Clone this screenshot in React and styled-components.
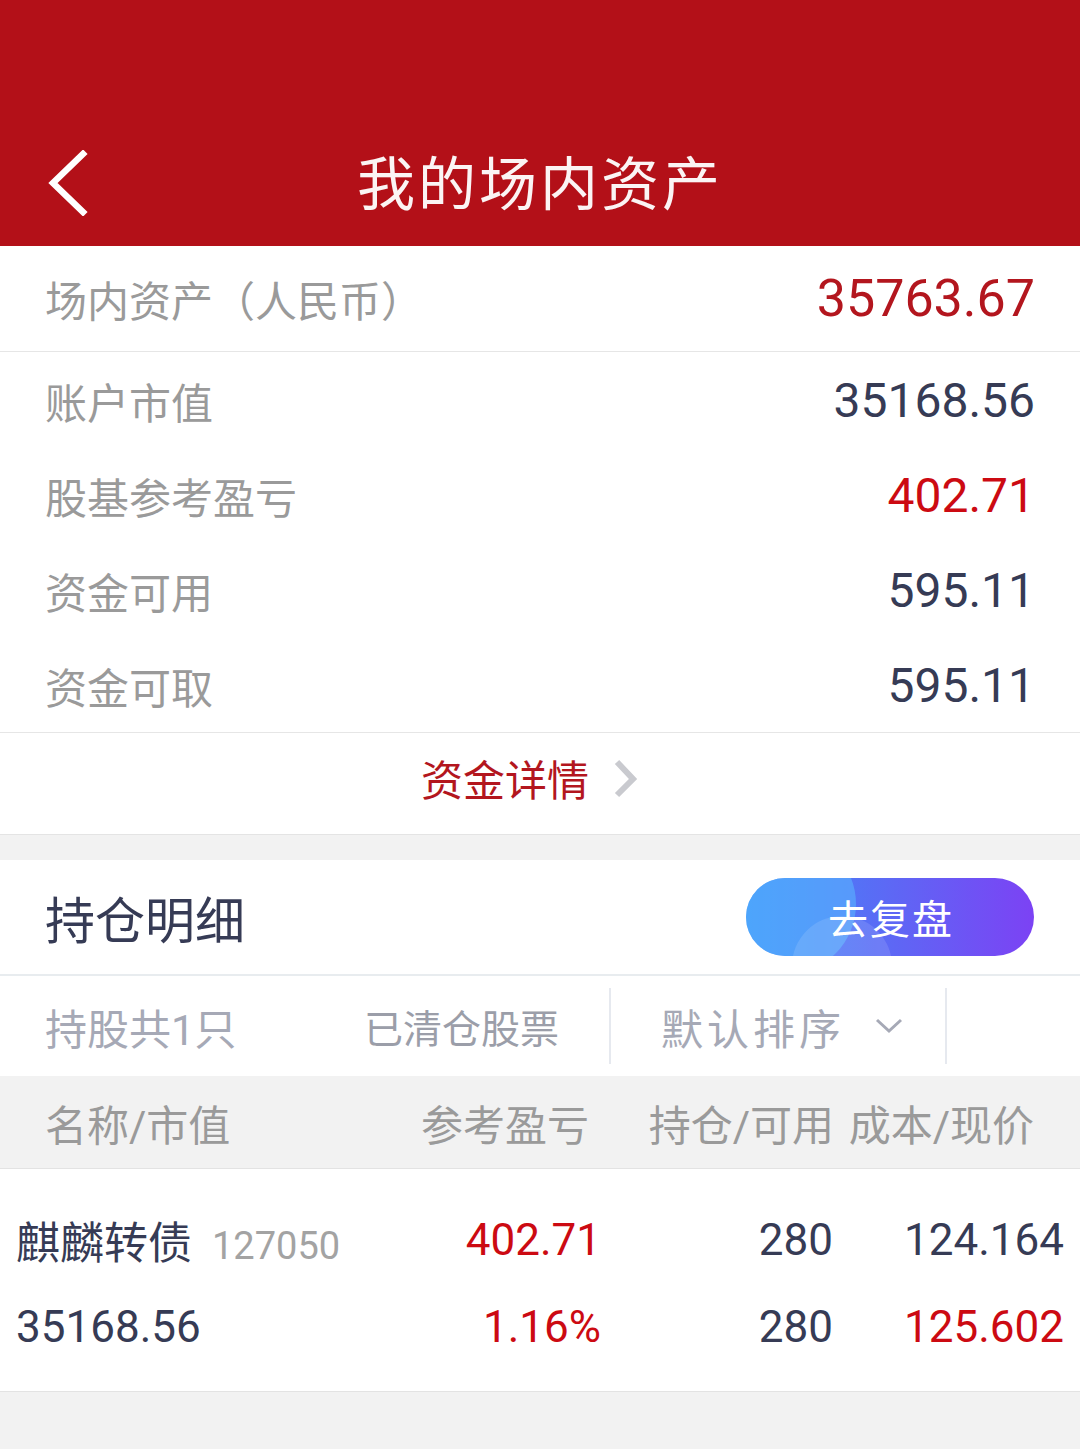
import React from "react";
import styled, { createGlobalStyle } from "styled-components";

const Global = createGlobalStyle`
  html, body { margin: 0; padding: 0; background: #f2f2f2; }
  body { font-family: Roboto, "Noto Sans CJK SC", "Noto Sans", sans-serif; }
  * { box-sizing: border-box; }
`;

const Page = styled.div`
  width: 1080px;
  min-height: 1449px;
  background: #f2f2f2;
  display: flex;
  flex-direction: column;
`;

const Header = styled.header`
  height: 246px;
  background: #b31018;
  display: flex;
  flex-direction: column;
  justify-content: flex-end;
`;

const HeaderBar = styled.div`
  height: 122px;
  position: relative;
  display: flex;
  align-items: center;
  justify-content: center;
`;

const BackBtn = styled.div`
  position: absolute;
  left: 44px;
  top: 26px;
  width: 48px;
  height: 66px;
  display: flex;
  align-items: center;
`;

const Title = styled.h1`
  margin: 0;
  color: #fbf4f4;
  font-size: 58px;
  font-weight: 400;
  letter-spacing: 3px;
  line-height: 1;
`;

const Card = styled.section`
  background: #fff;
`;

const TotalRow = styled.div`
  height: 106px;
  display: flex;
  align-items: center;
  justify-content: space-between;
  padding: 0 45px 0 45px;
  border-bottom: 1px solid #e6e6e6;
`;

const Label = styled.span`
  font-size: 42px;
  color: #9a9a9a;
`;

const Value = styled.span`
  font-family: Roboto, sans-serif;
  font-size: ${(p) => (p.$big ? 52 : 48)}px;
  color: ${(p) => (p.$red ? (p.$big ? "#b3161e" : "#cc0a12") : "#363b55")};
`;

const InfoList = styled.div`
  display: flex;
  flex-direction: column;
  border-bottom: 1px solid #e6e6e6;
`;

const InfoRow = styled.div`
  height: 95px;
  display: flex;
  align-items: center;
  justify-content: space-between;
  padding: 2px 45px 0;
`;

const DetailLink = styled.div`
  height: 102px;
  display: flex;
  align-items: center;
  justify-content: center;
  gap: 24px;
  padding: 0 20px 12px 0;
  color: #b3161e;
  font-size: 42px;
  border-bottom: 1px solid #e4e4e4;
`;

const Gap = styled.div`
  height: 25px;
`;

const SectionHead = styled.div`
  height: 116px;
  background: #fff;
  display: flex;
  align-items: center;
  justify-content: space-between;
  padding: 0 46px 0 45px;
  border-bottom: 2px solid #e8ecef;
`;

const SectionTitle = styled.h2`
  margin: 0;
  font-size: 50px;
  font-weight: 400;
  color: #363b55;
`;

const ReviewBtn = styled.div`
  position: relative;
  overflow: hidden;
  width: 288px;
  height: 78px;
  border-radius: 39px;
  background: linear-gradient(90deg, #3a8ff7 0%, #5d68f5 50%, #7c42f4 100%);
  display: flex;
  align-items: center;
  justify-content: center;
  color: #fff;
  font-size: 40px;
  padding-left: 2px;
`;

const Bubble = styled.span`
  position: absolute;
  border-radius: 50%;
  background: ${(p) => p.$bg};
  width: ${(p) => p.$size}px;
  height: ${(p) => p.$size}px;
  left: ${(p) => p.$x}px;
  top: ${(p) => p.$y}px;
`;

const BtnText = styled.span`
  position: relative;
  letter-spacing: 2px;
`;

const FilterRow = styled.div`
  height: 100px;
  background: #fff;
  display: grid;
  grid-template-columns: 611px 336px 1fr;
  align-items: center;
`;

const FilterCell = styled.div`
  height: 76px;
  display: flex;
  align-items: center;
  justify-content: ${(p) => p.$justify || "center"};
  padding: ${(p) => p.$pad || "0"};
  border-right: ${(p) => (p.$divider ? "2px solid #e6e9ef" : "none")};
  color: #a6a9b6;
  font-size: 42px;
  gap: ${(p) => p.$gap || 0}px;
  letter-spacing: ${(p) => p.$ls || 0}px;
`;

const Cleared = styled.span`
  font-size: 39px;
  color: #9b9ea9;
`;

const TableHead = styled.div`
  height: 93px;
  background: #f2f2f2;
  display: grid;
  grid-template-columns: 1fr 200px 245px 200px;
  align-items: center;
  padding: 0 46px 0 45px;
  border-bottom: 1px solid #e3e3e3;
  color: #9a9a9a;
  font-size: 42px;
`;

const HeadCell = styled.span`
  text-align: ${(p) => p.$align || "right"};
  white-space: nowrap;
`;

const Rows = styled.div`
  background: #fff;
  padding: 27px 16px 21px;
  border-bottom: 1px solid #e3e3e3;
`;

const DataRow = styled.div`
  height: 87px;
  display: grid;
  grid-template-columns: 1fr 200px 232px 231px;
  align-items: center;
`;

const Cell = styled.span`
  font-family: Roboto, "Noto Sans CJK SC", sans-serif;
  font-size: 44px;
  text-align: ${(p) => p.$align || "right"};
  color: ${(p) => (p.$red ? "#cc0a12" : "#363b55")};
  white-space: nowrap;
`;

const Code = styled.span`
  font-family: Roboto, sans-serif;
  font-size: 38px;
  color: #a3a3a3;
  margin-left: 20px;
`;

const Filler = styled.div`
  flex: 1;
  background: #f2f2f2;
`;

export default function App() {
  return (
    <Page>
      <Global />
      <Header>
        <HeaderBar>
          <BackBtn>
            <svg width="48" height="66" viewBox="0 0 48 66">
              <polyline
                points="39,4 9,33 39,62"
                fill="none"
                stroke="#fff"
                strokeWidth="6.5"
                strokeLinecap="square"
              />
            </svg>
          </BackBtn>
          <Title>我的场内资产</Title>
        </HeaderBar>
      </Header>

      <Card>
        <TotalRow>
          <Label>场内资产（人民币）</Label>
          <Value $big $red>35763.67</Value>
        </TotalRow>
        <InfoList>
          <InfoRow>
            <Label>账户市值</Label>
            <Value>35168.56</Value>
          </InfoRow>
          <InfoRow>
            <Label>股基参考盈亏</Label>
            <Value $red>402.71</Value>
          </InfoRow>
          <InfoRow>
            <Label>资金可用</Label>
            <Value>595.11</Value>
          </InfoRow>
          <InfoRow>
            <Label>资金可取</Label>
            <Value>595.11</Value>
          </InfoRow>
        </InfoList>
        <DetailLink>
          <span>资金详情</span>
          <svg width="26" height="40" viewBox="0 0 26 40">
            <polyline
              points="4,4 20,21 4,37"
              fill="none"
              stroke="#c9cacf"
              strokeWidth="6"
            />
          </svg>
        </DetailLink>
      </Card>

      <Gap />

      <SectionHead>
        <SectionTitle>持仓明细</SectionTitle>
        <ReviewBtn>
          <Bubble $bg="rgba(90,180,255,0.6)" $size={140} $x={-30} $y={-44} />
          <Bubble $bg="rgba(255,255,255,0.12)" $size={100} $x={46} $y={38} />
          <BtnText>去复盘</BtnText>
        </ReviewBtn>
      </SectionHead>

      <FilterRow>
        <FilterCell $divider $justify="space-between" $pad="0 50px 0 45px">
          <span>持股共1只</span>
          <Cleared>已清仓股票</Cleared>
        </FilterCell>
        <FilterCell $divider $gap={30} $ls={4} $pad="0 0 0 8px">
          <span>默认排序</span>
          <svg width="28" height="16" viewBox="0 0 28 16">
            <polyline
              points="2,2 14,13 26,2"
              fill="none"
              stroke="#a6a9b6"
              strokeWidth="3"
            />
          </svg>
        </FilterCell>
        <FilterCell />
      </FilterRow>

      <TableHead>
        <HeadCell $align="left">名称/市值</HeadCell>
        <HeadCell>参考盈亏</HeadCell>
        <HeadCell>持仓/可用</HeadCell>
        <HeadCell>成本/现价</HeadCell>
      </TableHead>

      <Rows>
        <DataRow>
          <Cell $align="left">
            麒麟转债<Code>127050</Code>
          </Cell>
          <Cell $red>402.71</Cell>
          <Cell>280</Cell>
          <Cell>124.164</Cell>
        </DataRow>
        <DataRow>
          <Cell $align="left">35168.56</Cell>
          <Cell $red>1.16%</Cell>
          <Cell>280</Cell>
          <Cell $red>125.602</Cell>
        </DataRow>
      </Rows>
      <Filler />
    </Page>
  );
}
